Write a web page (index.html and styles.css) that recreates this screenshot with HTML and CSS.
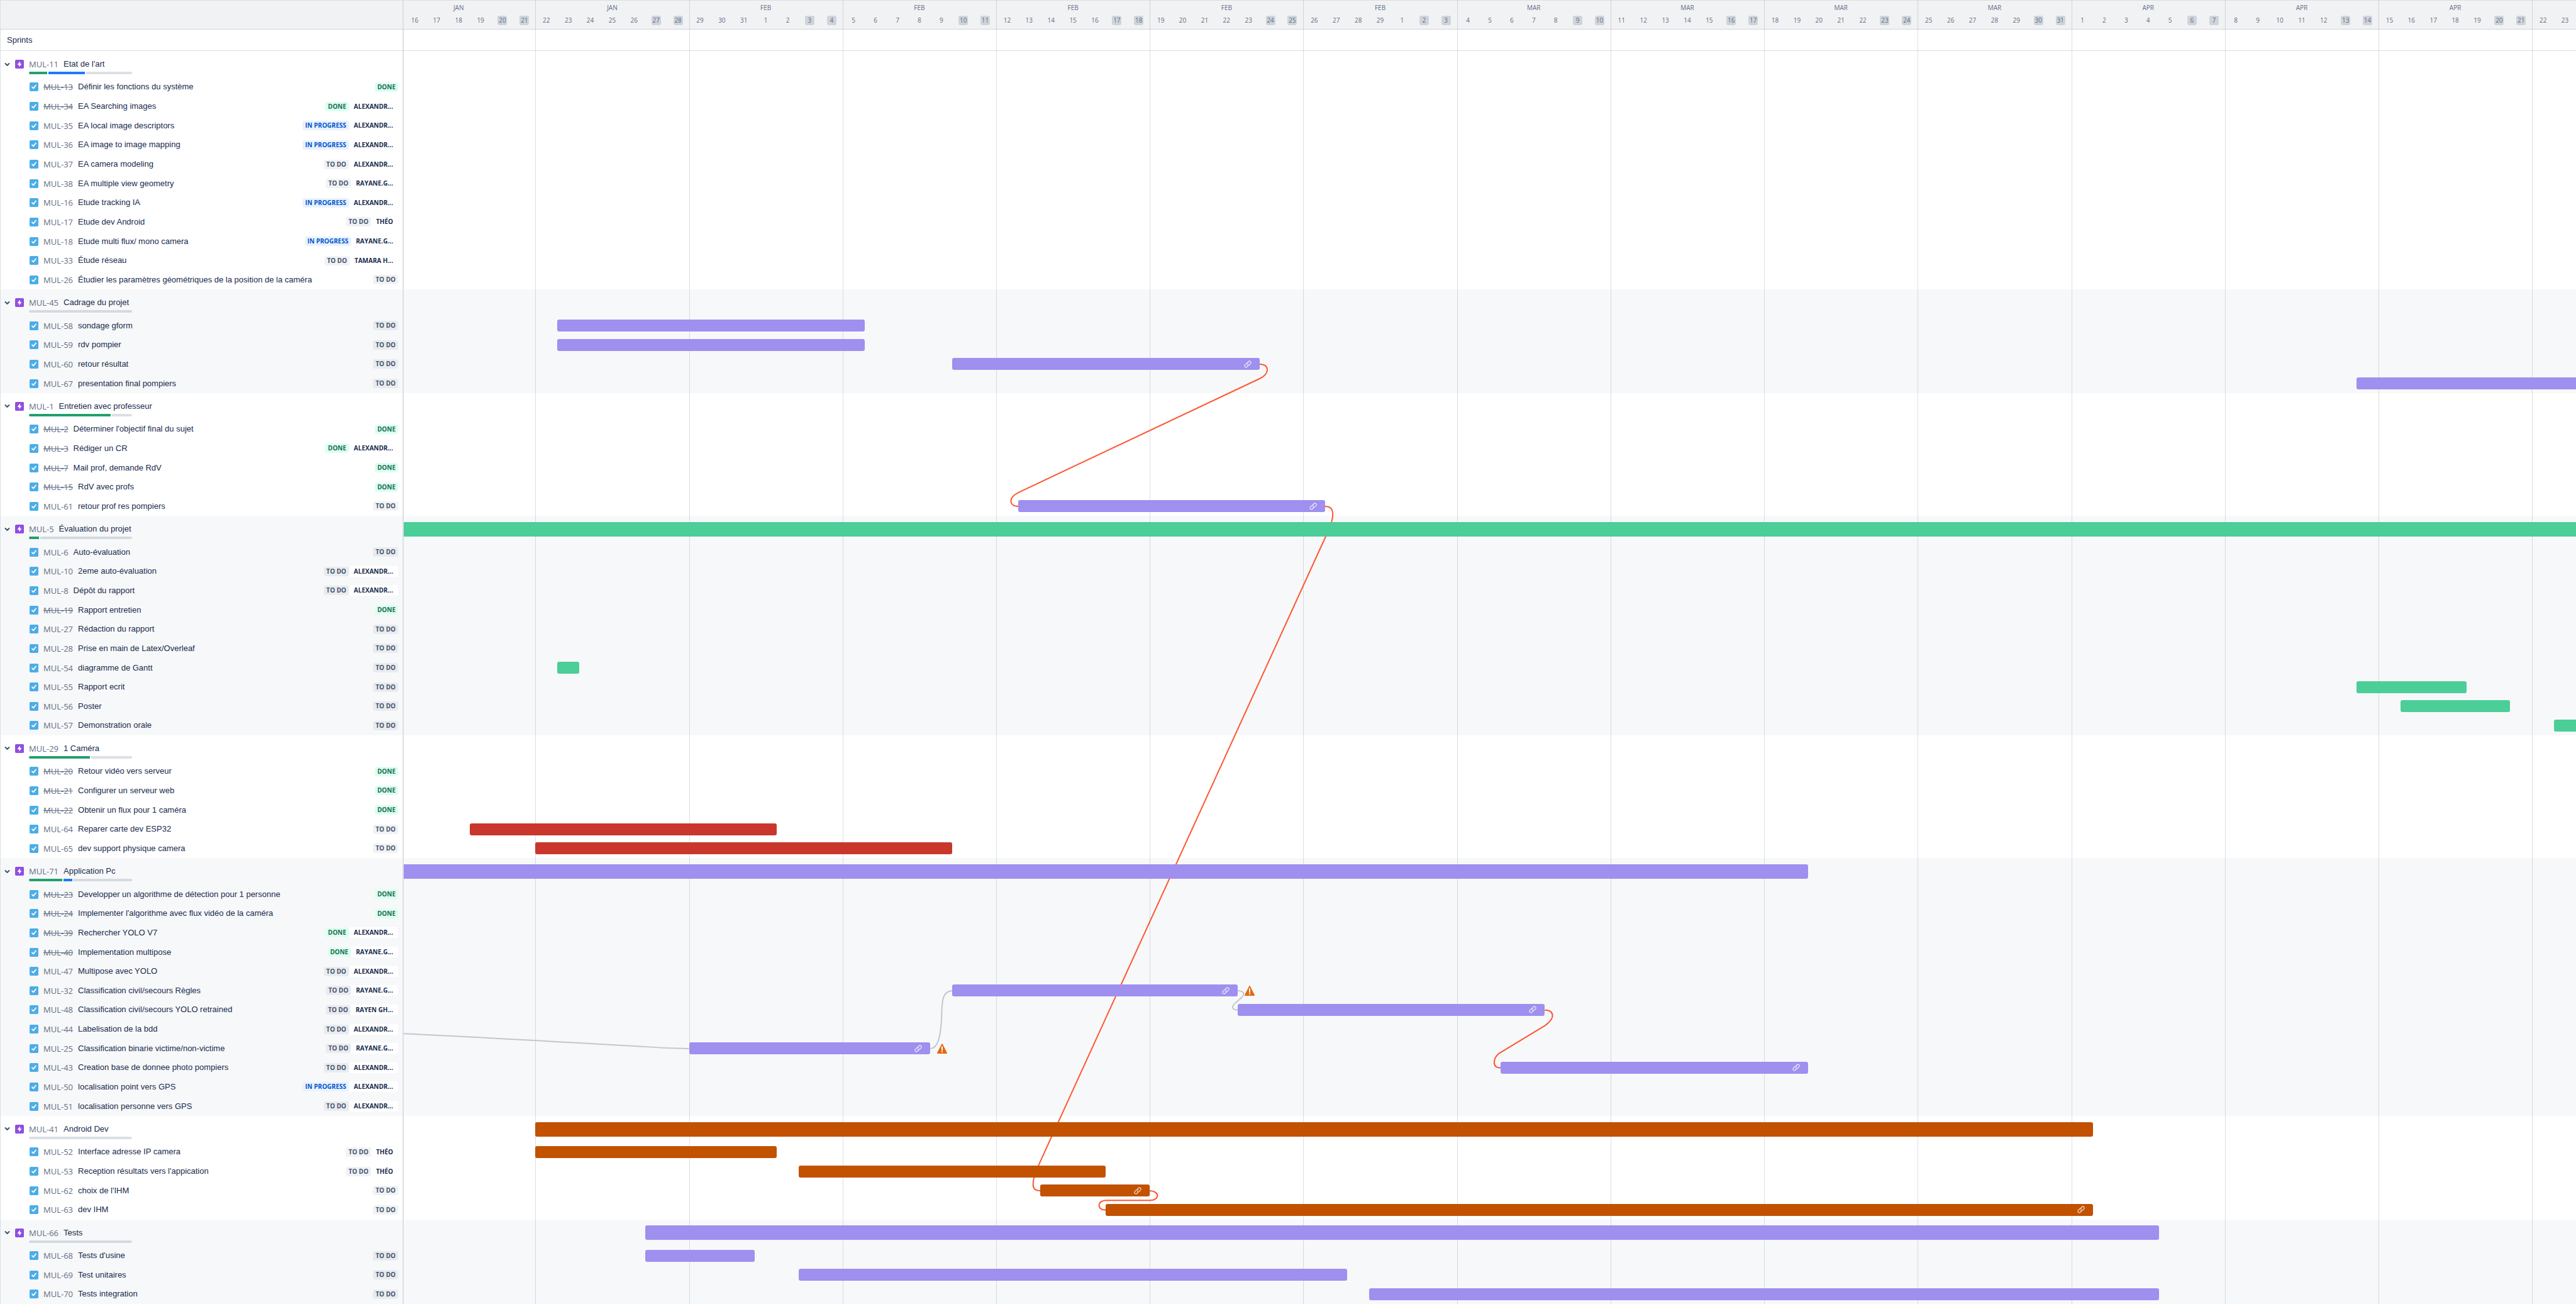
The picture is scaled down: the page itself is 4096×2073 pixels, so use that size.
FILE: index.html
```html
<!DOCTYPE html>
<html lang="fr">
<head>
<meta charset="utf-8">
<meta name="viewport" content="width=device-width, initial-scale=1">
<title>Sprints</title>
<link rel="stylesheet" href="styles.css">
</head>
<body>
<svg class="defs" aria-hidden="true">
  <symbol id="chevron" viewBox="0 0 9 9"><path d="M1.5 3 4.5 6 7.5 3" fill="none" stroke="#44546f" stroke-width="2" stroke-linecap="round" stroke-linejoin="round"/></symbol>
  <symbol id="epic" viewBox="0 0 16 16"><rect width="16" height="16" rx="2" fill="#904ee2"/><path d="M8.9 3.2 4.4 8.4Q4.2 9 4.8 9H7.2V12.6Q7.4 13 7.8 12.7L11.7 7.7Q11.9 7.1 11.3 7H9.2V3.4Q9.1 3.1 8.9 3.2Z" fill="#fff"/></symbol>
  <symbol id="task" viewBox="0 0 16 16"><rect width="16" height="16" rx="2" fill="#4bade8"/><path d="M4.6 8.3 7 10.7 11.4 5.2" fill="none" stroke="#fff" stroke-width="2" stroke-linecap="round" stroke-linejoin="round"/></symbol>
  <symbol id="link" viewBox="0 0 16 16"><g fill="none" stroke="#fff" stroke-width="1.7" stroke-linecap="round" opacity=".75"><path d="M7 5.2 9.6 2.4A2.9 2.9 0 0 1 14 6.6L11.2 9.4A2.9 2.9 0 0 1 7.2 9.4"/><path d="M9 10.8 6.4 13.6A2.9 2.9 0 0 1 2 9.4L4.8 6.6A2.9 2.9 0 0 1 8.8 6.6"/></g></symbol>
  <symbol id="warning" viewBox="0 0 16 16"><path d="M7.3.6Q8 0 8.7.6L16 15Q16 16 15.2 16H.8Q0 16 0 15Z" fill="#e56910"/><path d="M8 5V10.4M8 13V13.2" stroke="#fff" stroke-width="2" stroke-linecap="round"/></symbol>
</svg>
<main class="board">
  <header class="head">
    <div class="corner"></div>
    <div class="calendar">
      <span class="month w1">JAN</span><span class="month w2">JAN</span><span class="month w3">FEB</span><span class="month w4">FEB</span><span class="month w5">FEB</span><span class="month w6">FEB</span><span class="month w7">FEB</span><span class="month w8">MAR</span><span class="month w9">MAR</span><span class="month w10">MAR</span><span class="month w11">MAR</span><span class="month w12">APR</span><span class="month w13">APR</span><span class="month w14">APR</span>
      <span class="day">16</span><span class="day">17</span><span class="day">18</span><span class="day">19</span><span class="day off">20</span><span class="day off">21</span>
      <span class="day">22</span><span class="day">23</span><span class="day">24</span><span class="day">25</span><span class="day">26</span><span class="day off">27</span><span class="day off">28</span>
      <span class="day">29</span><span class="day">30</span><span class="day">31</span><span class="day">1</span><span class="day">2</span><span class="day off">3</span><span class="day off">4</span>
      <span class="day">5</span><span class="day">6</span><span class="day">7</span><span class="day">8</span><span class="day">9</span><span class="day off">10</span><span class="day off">11</span>
      <span class="day">12</span><span class="day">13</span><span class="day">14</span><span class="day">15</span><span class="day">16</span><span class="day off">17</span><span class="day off">18</span>
      <span class="day">19</span><span class="day">20</span><span class="day">21</span><span class="day">22</span><span class="day">23</span><span class="day off">24</span><span class="day off">25</span>
      <span class="day">26</span><span class="day">27</span><span class="day">28</span><span class="day">29</span><span class="day">1</span><span class="day off">2</span><span class="day off">3</span>
      <span class="day">4</span><span class="day">5</span><span class="day">6</span><span class="day">7</span><span class="day">8</span><span class="day off">9</span><span class="day off">10</span>
      <span class="day">11</span><span class="day">12</span><span class="day">13</span><span class="day">14</span><span class="day">15</span><span class="day off">16</span><span class="day off">17</span>
      <span class="day">18</span><span class="day">19</span><span class="day">20</span><span class="day">21</span><span class="day">22</span><span class="day off">23</span><span class="day off">24</span>
      <span class="day">25</span><span class="day">26</span><span class="day">27</span><span class="day">28</span><span class="day">29</span><span class="day off">30</span><span class="day off">31</span>
      <span class="day">1</span><span class="day">2</span><span class="day">3</span><span class="day">4</span><span class="day">5</span><span class="day off">6</span><span class="day off">7</span>
      <span class="day">8</span><span class="day">9</span><span class="day">10</span><span class="day">11</span><span class="day">12</span><span class="day off">13</span><span class="day off">14</span>
      <span class="day">15</span><span class="day">16</span><span class="day">17</span><span class="day">18</span><span class="day">19</span><span class="day off">20</span><span class="day off">21</span>
      <span class="day">22</span><span class="day">23</span>
    </div>
  </header>
  <div class="sprints"><div class="sprints-label">Sprints</div></div>
  <div class="weeks" aria-hidden="true"><i class="w2"></i><i class="w3"></i><i class="w4"></i><i class="w5"></i><i class="w6"></i><i class="w7"></i><i class="w8"></i><i class="w9"></i><i class="w10"></i><i class="w11"></i><i class="w12"></i><i class="w13"></i><i class="w14"></i><i class="w15"></i></div>

  <div class="plan">
    <svg class="links" viewBox="0 0 4508 2600" preserveAspectRatio="none" aria-hidden="true">
      <g class="muted">
        <path d="M0 2039C200 2048 400 2061 500 2066C535 2069 565 2070 592 2070"/>
        <path d="M1093 2070C1110 2070 1114 2040 1116 2010C1117 1975 1116 1950 1139 1950"/>
        <path d="M1730 1950C1740 1950 1743 1953 1743 1957C1743 1966 1720 1975 1720 1984C1720 1988 1723 1990 1731 1990"/>
      </g>
      <g class="late">
        <path d="M1776 650C1787 650 1792 655 1792 662C1792 668 1786 676 1776 680L1276 916C1266 921 1260 928 1260 934C1260 940 1265 945 1276 945"/>
        <path d="M1912 945C1922 945 1928 950 1928 961C1928 974 1922 988 1914 1006L1317 2313C1309 2330 1306 2345 1306 2352C1306 2360 1311 2365 1321 2365"/>
        <path d="M1548 2365C1558 2365 1564 2370 1564 2375C1564 2381 1558 2385 1548 2385H1458C1448 2385 1443 2390 1443 2395C1443 2401 1448 2405 1458 2405"/>
        <path d="M2368 1990C2379 1990 2384 1995 2384 2002C2384 2009 2377 2016 2369 2022L2273 2080C2267 2085 2263 2093 2263 2099C2263 2106 2268 2110 2277 2110"/>
      </g>
    </svg>

    <section class="group">
      <div class="row epic"><div class="cell"><button class="toggle" aria-label="Replier MUL-11"><svg><use href="#chevron"/></svg></button><svg class="icon"><use href="#epic"/></svg><div class="summary"><div class="line"><a class="key" href="#MUL-11">MUL-11</a><span class="title">Etat de l'art</span></div><div class="progress"><i class="p-done" style="flex-grow:2"></i><i class="p-doing" style="flex-grow:4"></i><i style="flex-grow:5"></i></div></div></div></div>
      <div class="row"><div class="cell"><svg class="icon"><use href="#task"/></svg><a class="key closed" href="#MUL-13">MUL-13</a><span class="title">Définir les fonctions du système</span><span class="status done">DONE</span></div></div>
      <div class="row"><div class="cell"><svg class="icon"><use href="#task"/></svg><a class="key closed" href="#MUL-34">MUL-34</a><span class="title">EA Searching images</span><span class="status done">DONE</span><span class="who">ALEXANDR...</span></div></div>
      <div class="row"><div class="cell"><svg class="icon"><use href="#task"/></svg><a class="key" href="#MUL-35">MUL-35</a><span class="title">EA local image descriptors</span><span class="status doing">IN PROGRESS</span><span class="who">ALEXANDR...</span></div></div>
      <div class="row"><div class="cell"><svg class="icon"><use href="#task"/></svg><a class="key" href="#MUL-36">MUL-36</a><span class="title">EA image to image mapping</span><span class="status doing">IN PROGRESS</span><span class="who">ALEXANDR...</span></div></div>
      <div class="row"><div class="cell"><svg class="icon"><use href="#task"/></svg><a class="key" href="#MUL-37">MUL-37</a><span class="title">EA camera modeling</span><span class="status">TO DO</span><span class="who">ALEXANDR...</span></div></div>
      <div class="row"><div class="cell"><svg class="icon"><use href="#task"/></svg><a class="key" href="#MUL-38">MUL-38</a><span class="title">EA multiple view geometry</span><span class="status">TO DO</span><span class="who">RAYANE.G...</span></div></div>
      <div class="row"><div class="cell"><svg class="icon"><use href="#task"/></svg><a class="key" href="#MUL-16">MUL-16</a><span class="title">Etude tracking IA</span><span class="status doing">IN PROGRESS</span><span class="who">ALEXANDR...</span></div></div>
      <div class="row"><div class="cell"><svg class="icon"><use href="#task"/></svg><a class="key" href="#MUL-17">MUL-17</a><span class="title">Etude dev Android</span><span class="status">TO DO</span><span class="who">THÉO</span></div></div>
      <div class="row"><div class="cell"><svg class="icon"><use href="#task"/></svg><a class="key" href="#MUL-18">MUL-18</a><span class="title">Etude multi flux/ mono camera</span><span class="status doing">IN PROGRESS</span><span class="who">RAYANE.G...</span></div></div>
      <div class="row"><div class="cell"><svg class="icon"><use href="#task"/></svg><a class="key" href="#MUL-33">MUL-33</a><span class="title">Étude réseau</span><span class="status">TO DO</span><span class="who">TAMARA H...</span></div></div>
      <div class="row"><div class="cell"><svg class="icon"><use href="#task"/></svg><a class="key" href="#MUL-26">MUL-26</a><span class="title">Étudier les paramètres géométriques de la position de la caméra</span><span class="status">TO DO</span></div></div>
    </section>

    <section class="group alt">
      <div class="row epic"><div class="cell"><button class="toggle" aria-label="Replier MUL-45"><svg><use href="#chevron"/></svg></button><svg class="icon"><use href="#epic"/></svg><div class="summary"><div class="line"><a class="key" href="#MUL-45">MUL-45</a><span class="title">Cadrage du projet</span></div><div class="progress"><i style="flex-grow:4"></i></div></div></div></div>
      <div class="row"><div class="cell"><svg class="icon"><use href="#task"/></svg><a class="key" href="#MUL-58">MUL-58</a><span class="title">sondage gform</span><span class="status">TO DO</span></div><div class="track"><div class="bar purple" style="grid-column:8/22"></div></div></div>
      <div class="row"><div class="cell"><svg class="icon"><use href="#task"/></svg><a class="key" href="#MUL-59">MUL-59</a><span class="title">rdv pompier</span><span class="status">TO DO</span></div><div class="track"><div class="bar purple" style="grid-column:8/22"></div></div></div>
      <div class="row"><div class="cell"><svg class="icon"><use href="#task"/></svg><a class="key" href="#MUL-60">MUL-60</a><span class="title">retour résultat</span><span class="status">TO DO</span></div><div class="track"><div class="bar purple" style="grid-column:26/40"><svg class="link"><use href="#link"/></svg></div></div></div>
      <div class="row"><div class="cell"><svg class="icon"><use href="#task"/></svg><a class="key" href="#MUL-67">MUL-67</a><span class="title">presentation final pompiers</span><span class="status">TO DO</span></div><div class="track"><div class="bar purple to-edge" style="grid-column:90/100"></div></div></div>
    </section>

    <section class="group">
      <div class="row epic"><div class="cell"><button class="toggle" aria-label="Replier MUL-1"><svg><use href="#chevron"/></svg></button><svg class="icon"><use href="#epic"/></svg><div class="summary"><div class="line"><a class="key" href="#MUL-1">MUL-1</a><span class="title">Entretien avec professeur</span></div><div class="progress"><i class="p-done" style="flex-grow:4"></i><i style="flex-grow:1"></i></div></div></div></div>
      <div class="row"><div class="cell"><svg class="icon"><use href="#task"/></svg><a class="key closed" href="#MUL-2">MUL-2</a><span class="title">Déterminer l'objectif final du sujet</span><span class="status done">DONE</span></div></div>
      <div class="row"><div class="cell"><svg class="icon"><use href="#task"/></svg><a class="key closed" href="#MUL-3">MUL-3</a><span class="title">Rédiger un CR</span><span class="status done">DONE</span><span class="who">ALEXANDR...</span></div></div>
      <div class="row"><div class="cell"><svg class="icon"><use href="#task"/></svg><a class="key closed" href="#MUL-7">MUL-7</a><span class="title">Mail prof, demande RdV</span><span class="status done">DONE</span></div></div>
      <div class="row"><div class="cell"><svg class="icon"><use href="#task"/></svg><a class="key closed" href="#MUL-15">MUL-15</a><span class="title">RdV avec profs</span><span class="status done">DONE</span></div></div>
      <div class="row"><div class="cell"><svg class="icon"><use href="#task"/></svg><a class="key" href="#MUL-61">MUL-61</a><span class="title">retour prof res pompiers</span><span class="status">TO DO</span></div><div class="track"><div class="bar purple" style="grid-column:29/43"><svg class="link"><use href="#link"/></svg></div></div></div>
    </section>

    <section class="group alt">
      <div class="row epic"><div class="cell"><button class="toggle" aria-label="Replier MUL-5"><svg><use href="#chevron"/></svg></button><svg class="icon"><use href="#epic"/></svg><div class="summary"><div class="line"><a class="key" href="#MUL-5">MUL-5</a><span class="title">Évaluation du projet</span></div><div class="progress"><i class="p-done" style="flex-grow:1"></i><i style="flex-grow:9"></i></div></div></div><div class="track"><div class="bar green from-edge to-edge" style="grid-column:1/100"></div></div></div>
      <div class="row"><div class="cell"><svg class="icon"><use href="#task"/></svg><a class="key" href="#MUL-6">MUL-6</a><span class="title">Auto-évaluation</span><span class="status">TO DO</span></div></div>
      <div class="row"><div class="cell"><svg class="icon"><use href="#task"/></svg><a class="key" href="#MUL-10">MUL-10</a><span class="title">2eme auto-évaluation</span><span class="status">TO DO</span><span class="who">ALEXANDR...</span></div></div>
      <div class="row"><div class="cell"><svg class="icon"><use href="#task"/></svg><a class="key" href="#MUL-8">MUL-8</a><span class="title">Dépôt du rapport</span><span class="status">TO DO</span><span class="who">ALEXANDR...</span></div></div>
      <div class="row"><div class="cell"><svg class="icon"><use href="#task"/></svg><a class="key closed" href="#MUL-19">MUL-19</a><span class="title">Rapport entretien</span><span class="status done">DONE</span></div></div>
      <div class="row"><div class="cell"><svg class="icon"><use href="#task"/></svg><a class="key" href="#MUL-27">MUL-27</a><span class="title">Rédaction du rapport</span><span class="status">TO DO</span></div></div>
      <div class="row"><div class="cell"><svg class="icon"><use href="#task"/></svg><a class="key" href="#MUL-28">MUL-28</a><span class="title">Prise en main de Latex/Overleaf</span><span class="status">TO DO</span></div></div>
      <div class="row"><div class="cell"><svg class="icon"><use href="#task"/></svg><a class="key" href="#MUL-54">MUL-54</a><span class="title">diagramme de Gantt</span><span class="status">TO DO</span></div><div class="track"><div class="bar green" style="grid-column:8/9"></div></div></div>
      <div class="row"><div class="cell"><svg class="icon"><use href="#task"/></svg><a class="key" href="#MUL-55">MUL-55</a><span class="title">Rapport ecrit</span><span class="status">TO DO</span></div><div class="track"><div class="bar green" style="grid-column:90/95"></div></div></div>
      <div class="row"><div class="cell"><svg class="icon"><use href="#task"/></svg><a class="key" href="#MUL-56">MUL-56</a><span class="title">Poster</span><span class="status">TO DO</span></div><div class="track"><div class="bar green" style="grid-column:92/97"></div></div></div>
      <div class="row"><div class="cell"><svg class="icon"><use href="#task"/></svg><a class="key" href="#MUL-57">MUL-57</a><span class="title">Demonstration orale</span><span class="status">TO DO</span></div><div class="track"><div class="bar green to-edge" style="grid-column:99/100"></div></div></div>
    </section>

    <section class="group">
      <div class="row epic"><div class="cell"><button class="toggle" aria-label="Replier MUL-29"><svg><use href="#chevron"/></svg></button><svg class="icon"><use href="#epic"/></svg><div class="summary"><div class="line"><a class="key" href="#MUL-29">MUL-29</a><span class="title">1 Caméra</span></div><div class="progress"><i class="p-done" style="flex-grow:3"></i><i style="flex-grow:2"></i></div></div></div></div>
      <div class="row"><div class="cell"><svg class="icon"><use href="#task"/></svg><a class="key closed" href="#MUL-20">MUL-20</a><span class="title">Retour vidéo vers serveur</span><span class="status done">DONE</span></div></div>
      <div class="row"><div class="cell"><svg class="icon"><use href="#task"/></svg><a class="key closed" href="#MUL-21">MUL-21</a><span class="title">Configurer un serveur web</span><span class="status done">DONE</span></div></div>
      <div class="row"><div class="cell"><svg class="icon"><use href="#task"/></svg><a class="key closed" href="#MUL-22">MUL-22</a><span class="title">Obtenir un flux pour 1 caméra</span><span class="status done">DONE</span></div></div>
      <div class="row"><div class="cell"><svg class="icon"><use href="#task"/></svg><a class="key" href="#MUL-64">MUL-64</a><span class="title">Reparer carte dev ESP32</span><span class="status">TO DO</span></div><div class="track"><div class="bar red" style="grid-column:4/18"></div></div></div>
      <div class="row"><div class="cell"><svg class="icon"><use href="#task"/></svg><a class="key" href="#MUL-65">MUL-65</a><span class="title">dev support physique camera</span><span class="status">TO DO</span></div><div class="track"><div class="bar red" style="grid-column:7/26"></div></div></div>
    </section>

    <section class="group alt">
      <div class="row epic"><div class="cell"><button class="toggle" aria-label="Replier MUL-71"><svg><use href="#chevron"/></svg></button><svg class="icon"><use href="#epic"/></svg><div class="summary"><div class="line"><a class="key" href="#MUL-71">MUL-71</a><span class="title">Application Pc</span></div><div class="progress"><i class="p-done" style="flex-grow:4"></i><i class="p-doing" style="flex-grow:1"></i><i style="flex-grow:7"></i></div></div></div><div class="track"><div class="bar purple from-edge" style="grid-column:1/65"></div></div></div>
      <div class="row"><div class="cell"><svg class="icon"><use href="#task"/></svg><a class="key closed" href="#MUL-23">MUL-23</a><span class="title">Developper un algorithme de détection pour 1 personne</span><span class="status done">DONE</span></div></div>
      <div class="row"><div class="cell"><svg class="icon"><use href="#task"/></svg><a class="key closed" href="#MUL-24">MUL-24</a><span class="title">Implementer l'algorithme avec flux vidéo de la caméra</span><span class="status done">DONE</span></div></div>
      <div class="row"><div class="cell"><svg class="icon"><use href="#task"/></svg><a class="key closed" href="#MUL-39">MUL-39</a><span class="title">Rechercher YOLO V7</span><span class="status done">DONE</span><span class="who">ALEXANDR...</span></div></div>
      <div class="row"><div class="cell"><svg class="icon"><use href="#task"/></svg><a class="key closed" href="#MUL-40">MUL-40</a><span class="title">Implementation multipose</span><span class="status done">DONE</span><span class="who">RAYANE.G...</span></div></div>
      <div class="row"><div class="cell"><svg class="icon"><use href="#task"/></svg><a class="key" href="#MUL-47">MUL-47</a><span class="title">Multipose avec YOLO</span><span class="status">TO DO</span><span class="who">ALEXANDR...</span></div></div>
      <div class="row"><div class="cell"><svg class="icon"><use href="#task"/></svg><a class="key" href="#MUL-32">MUL-32</a><span class="title">Classification civil/secours Règles</span><span class="status">TO DO</span><span class="who">RAYANE.G...</span></div><div class="track"><div class="bar purple" style="grid-column:26/39"><svg class="link"><use href="#link"/></svg><svg class="warning"><use href="#warning"/></svg></div></div></div>
      <div class="row"><div class="cell"><svg class="icon"><use href="#task"/></svg><a class="key" href="#MUL-48">MUL-48</a><span class="title">Classification civil/secours YOLO retrained</span><span class="status">TO DO</span><span class="who">RAYEN GH...</span></div><div class="track"><div class="bar purple" style="grid-column:39/53"><svg class="link"><use href="#link"/></svg></div></div></div>
      <div class="row"><div class="cell"><svg class="icon"><use href="#task"/></svg><a class="key" href="#MUL-44">MUL-44</a><span class="title">Labelisation de la bdd</span><span class="status">TO DO</span><span class="who">ALEXANDR...</span></div></div>
      <div class="row"><div class="cell"><svg class="icon"><use href="#task"/></svg><a class="key" href="#MUL-25">MUL-25</a><span class="title">Classification binarie victime/non-victime</span><span class="status">TO DO</span><span class="who">RAYANE.G...</span></div><div class="track"><div class="bar purple" style="grid-column:14/25"><svg class="link"><use href="#link"/></svg><svg class="warning"><use href="#warning"/></svg></div></div></div>
      <div class="row"><div class="cell"><svg class="icon"><use href="#task"/></svg><a class="key" href="#MUL-43">MUL-43</a><span class="title">Creation base de donnee photo pompiers</span><span class="status">TO DO</span><span class="who">ALEXANDR...</span></div><div class="track"><div class="bar purple" style="grid-column:51/65"><svg class="link"><use href="#link"/></svg></div></div></div>
      <div class="row"><div class="cell"><svg class="icon"><use href="#task"/></svg><a class="key" href="#MUL-50">MUL-50</a><span class="title">localisation point vers GPS</span><span class="status doing">IN PROGRESS</span><span class="who">ALEXANDR...</span></div></div>
      <div class="row"><div class="cell"><svg class="icon"><use href="#task"/></svg><a class="key" href="#MUL-51">MUL-51</a><span class="title">localisation personne vers GPS</span><span class="status">TO DO</span><span class="who">ALEXANDR...</span></div></div>
    </section>

    <section class="group">
      <div class="row epic"><div class="cell"><button class="toggle" aria-label="Replier MUL-41"><svg><use href="#chevron"/></svg></button><svg class="icon"><use href="#epic"/></svg><div class="summary"><div class="line"><a class="key" href="#MUL-41">MUL-41</a><span class="title">Android Dev</span></div><div class="progress"><i style="flex-grow:4"></i></div></div></div><div class="track"><div class="bar orange" style="grid-column:7/78"></div></div></div>
      <div class="row"><div class="cell"><svg class="icon"><use href="#task"/></svg><a class="key" href="#MUL-52">MUL-52</a><span class="title">Interface adresse IP camera</span><span class="status">TO DO</span><span class="who">THÉO</span></div><div class="track"><div class="bar orange" style="grid-column:7/18"></div></div></div>
      <div class="row"><div class="cell"><svg class="icon"><use href="#task"/></svg><a class="key" href="#MUL-53">MUL-53</a><span class="title">Reception résultats vers l'appication</span><span class="status">TO DO</span><span class="who">THÉO</span></div><div class="track"><div class="bar orange" style="grid-column:19/33"></div></div></div>
      <div class="row"><div class="cell"><svg class="icon"><use href="#task"/></svg><a class="key" href="#MUL-62">MUL-62</a><span class="title">choix de l'IHM</span><span class="status">TO DO</span></div><div class="track"><div class="bar orange" style="grid-column:30/35"><svg class="link"><use href="#link"/></svg></div></div></div>
      <div class="row"><div class="cell"><svg class="icon"><use href="#task"/></svg><a class="key" href="#MUL-63">MUL-63</a><span class="title">dev IHM</span><span class="status">TO DO</span></div><div class="track"><div class="bar orange" style="grid-column:33/78"><svg class="link"><use href="#link"/></svg></div></div></div>
    </section>

    <section class="group alt">
      <div class="row epic"><div class="cell"><button class="toggle" aria-label="Replier MUL-66"><svg><use href="#chevron"/></svg></button><svg class="icon"><use href="#epic"/></svg><div class="summary"><div class="line"><a class="key" href="#MUL-66">MUL-66</a><span class="title">Tests</span></div><div class="progress"><i style="flex-grow:3"></i></div></div></div><div class="track"><div class="bar purple" style="grid-column:12/81"></div></div></div>
      <div class="row"><div class="cell"><svg class="icon"><use href="#task"/></svg><a class="key" href="#MUL-68">MUL-68</a><span class="title">Tests d'usine</span><span class="status">TO DO</span></div><div class="track"><div class="bar purple" style="grid-column:12/17"></div></div></div>
      <div class="row"><div class="cell"><svg class="icon"><use href="#task"/></svg><a class="key" href="#MUL-69">MUL-69</a><span class="title">Test unitaires</span><span class="status">TO DO</span></div><div class="track"><div class="bar purple" style="grid-column:19/44"></div></div></div>
      <div class="row"><div class="cell"><svg class="icon"><use href="#task"/></svg><a class="key" href="#MUL-70">MUL-70</a><span class="title">Tests integration</span><span class="status">TO DO</span></div><div class="track"><div class="bar purple" style="grid-column:45/81"></div></div></div>
    </section>
  </div>
</main>
</body>
</html>
```
FILE: styles.css
```css
:root {
  --list-width: 642px;
  --days: 99;
  --line: #dcdfe4;
  --text: #172b4d;
  --subtle: #626f86;
}

* { box-sizing: border-box; }

body {
  margin: 0;
  background: #fff;
  color: var(--text);
  font: 13px/18px "Liberation Sans", Arial, sans-serif;
}

.defs { position: absolute; width: 0; height: 0; }

.board {
  position: relative;
  display: flex;
  flex-direction: column;
  min-height: 100vh;
}

/* Header with months and days */
.head,
.sprints,
.row {
  display: grid;
  grid-template-columns: var(--list-width) minmax(0, 1fr);
}

.head {
  height: 47px;
  background: #f1f2f4;
  border-top: 1px solid var(--line);
  border-bottom: 1px solid #cfd4db;
}

.corner,
.sprints-label,
.cell {
  border-left: 1px solid var(--line);
  border-right: 2px solid var(--line);
}

.calendar,
.track,
.weeks {
  display: grid;
  grid-template-columns: repeat(var(--days), minmax(0, 1fr));
}

.calendar {
  grid-template-rows: 16px 15px;
  row-gap: 4px;
  padding-top: 4px;
  justify-items: center;
  color: var(--subtle);
  font: 10px/15px "Open Sans", "Noto Sans", sans-serif;
}

.month { grid-row: 1; justify-self: center; }
.day { grid-row: 2; min-width: 15px; text-align: center; border-radius: 3px; }
.day.off { background: #cfd4db; }

.month.w1 { grid-column: 3; }
.month.w2 { grid-column: 10; }
.month.w3 { grid-column: 17; }
.month.w4 { grid-column: 24; }
.month.w5 { grid-column: 31; }
.month.w6 { grid-column: 38; }
.month.w7 { grid-column: 45; }
.month.w8 { grid-column: 52; }
.month.w9 { grid-column: 59; }
.month.w10 { grid-column: 66; }
.month.w11 { grid-column: 73; }
.month.w12 { grid-column: 80; }
.month.w13 { grid-column: 87; }
.month.w14 { grid-column: 94; }

.sprints { height: 34px; border-bottom: 1px solid var(--line); }
.sprints-label { padding: 8px 10px; }

/* Monday lines, laid over the header and every row */
.weeks {
  position: absolute;
  inset: 0 0 0 var(--list-width);
  z-index: 1;
  pointer-events: none;
}

.weeks i { grid-row: 1; border-left: 1px solid rgba(9, 30, 66, 0.14); }
.weeks .w2 { grid-column: 7; }
.weeks .w3 { grid-column: 14; }
.weeks .w4 { grid-column: 21; }
.weeks .w5 { grid-column: 28; }
.weeks .w6 { grid-column: 35; }
.weeks .w7 { grid-column: 42; }
.weeks .w8 { grid-column: 49; }
.weeks .w9 { grid-column: 56; }
.weeks .w10 { grid-column: 63; }
.weeks .w11 { grid-column: 70; }
.weeks .w12 { grid-column: 77; }
.weeks .w13 { grid-column: 84; }
.weeks .w14 { grid-column: 91; }
.weeks .w15 { grid-column: 98; }

/* Rows share the height that is left, epics a little taller than tasks */
.plan {
  position: relative;
  flex: 1;
  display: flex;
  flex-direction: column;
}

.group { display: contents; }
.row { flex: 40 1 0; }
.row.epic { flex-grow: 55; }
.alt .row { background: #f7f8f9; }

.cell {
  grid-column: 1;
  display: flex;
  align-items: center;
  padding: 0 7px 0 46px;
}

.icon { flex: none; width: 14px; height: 14px; margin-right: 8px; }

.key {
  margin-right: 8px;
  color: var(--subtle);
  font: 13px/18px "Open Sans", "Noto Sans", sans-serif;
  text-decoration: none;
}

.key.closed { text-decoration: line-through; }
.title { white-space: nowrap; }

.status,
.who {
  flex: none;
  border-radius: 3px;
  font: 700 10px/15px "Open Sans", "Noto Sans", sans-serif;
}

.title + .status { margin-left: auto; }
.status { padding: 0 4px; background: rgba(9, 30, 66, 0.06); color: #44546f; }
.status.done { background: #dcfff1; color: #216e4e; }
.status.doing { background: #e9f2ff; color: #0055cc; }
.who { padding: 0 8px; background: #fff; line-height: 17px; }

.epic .cell { align-items: flex-start; padding: 12px 7px 0 6px; }
.epic .icon { margin-top: 2px; }

.toggle {
  flex: none;
  width: 9px;
  height: 18px;
  margin: 0 8px 0 0;
  padding: 0;
  border: 0;
  background: none;
}

.toggle svg { display: block; width: 9px; height: 9px; }
.line { display: flex; align-items: center; }
.progress { display: flex; gap: 2px; width: 164px; height: 4px; margin-top: 3px; border-radius: 2px; overflow: hidden; }
.progress i { flex: 1 1 0; background: var(--line); }
.alt .progress i { background: #d5d9e0; }
.progress .p-done, .alt .progress .p-done { background: #22a06b; }
.progress .p-doing, .alt .progress .p-doing { background: #1d7afc; }

/* Timeline bars */
.track { grid-column: 2; align-items: center; position: relative; z-index: 3; }

.bar {
  position: relative;
  display: flex;
  align-items: center;
  justify-content: flex-end;
  height: 19px;
  padding-right: 13px;
  border-radius: 3px;
}

.epic .bar { height: 23px; }
.bar.from-edge { border-top-left-radius: 0; border-bottom-left-radius: 0; }
.bar.to-edge { border-top-right-radius: 0; border-bottom-right-radius: 0; }
.purple { background: #9f8fef; }
.green { background: #4bce97; }
.red { background: #c9372c; }
.orange { background: #c25100; }
.link { width: 12px; height: 12px; }
.warning { position: absolute; left: calc(100% + 11px); width: 16px; height: 16px; }

/* Dependencies run beneath the bars */
.links {
  position: absolute;
  top: 0;
  left: var(--list-width);
  width: calc(100% - var(--list-width));
  height: 100%;
  z-index: 2;
  pointer-events: none;
}

.links path { fill: none; stroke-width: 2px; vector-effect: non-scaling-stroke; }
.muted { stroke: #c1c7d0; }
.late { stroke: #ff5630; }
```
